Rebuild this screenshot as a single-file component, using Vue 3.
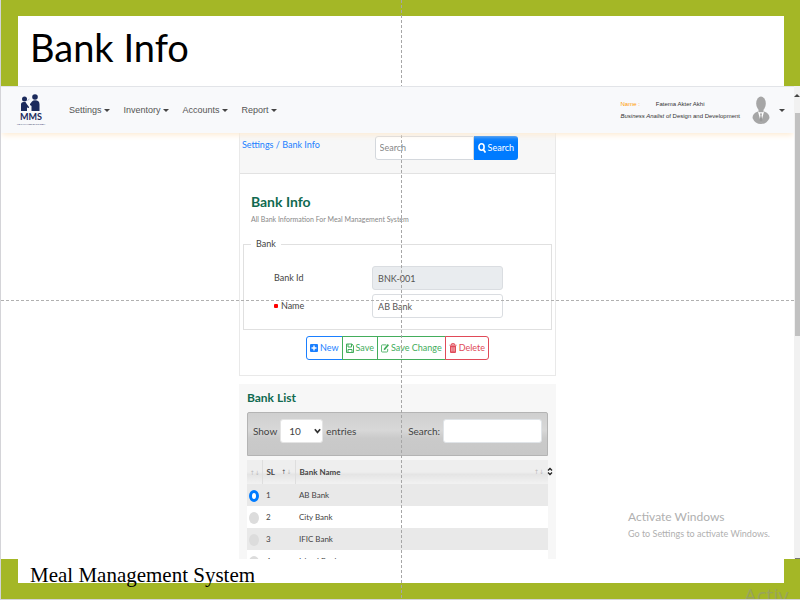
<script setup>
import { ref } from 'vue'

const menus = ['Settings', 'Inventory', 'Accounts', 'Report']
const banks = [
  { sl: 1, name: 'AB Bank' },
  { sl: 2, name: 'City Bank' },
  { sl: 3, name: 'IFIC Bank' },
  { sl: 4, name: 'Islami Bank' },
]
const selected = ref(1)
const bankId = ref('BNK-001')
const bankName = ref('AB Bank')
const query = ref('')
const filter = ref('')
const pageSize = ref('10')
</script>

<template>
  <div class="slide">
    <header class="slide-head"><h1>Bank Info</h1></header>

    <div class="window">
      <div class="page">
        <nav class="navbar">
          <a class="brand" href="#" aria-label="MMS">
            <svg class="logo" viewBox="0 0 32 18" aria-hidden="true">
              <g fill="#1b2a5c">
                <circle cx="9.5" cy="5" r="2.5" />
                <path d="M6 17V10.5Q6 8 8.5 8h2l1.6 2.4L14 13v1l-2-.5V17z" />
                <circle cx="20" cy="3" r="2.8" />
                <path d="M16.500 17v-5l-1.500-1v-1l2-2.500Q18 6.300 20 6.300q4.500 0 4.500 4.200V17z" />
              </g>
              <path d="M12.500 6.500l2-1.500" stroke="#9aa6c4" stroke-width=".7" fill="none" />
            </svg>
            <span class="brand-name">MMS</span>
            <span class="brand-sub">MEAL MANAGEMENT SYSTEM</span>
          </a>
          <ul class="menu">
            <li v-for="m in menus" :key="m"><a href="#">{{ m }}<i class="caret"></i></a></li>
          </ul>
          <div class="user">
            <div class="user-name"><span class="tag">Name :</span><span>Fatema Akter Akhi</span></div>
            <div><em>Business Analist</em> of Design and Development</div>
          </div>
          <button class="avatar" type="button" aria-label="Account">
            <svg viewBox="0 0 18 28" aria-hidden="true">
              <ellipse cx="9" cy="7.500" rx="4.800" ry="7" fill="#a6a6a6" />
              <path d="M6.500 12h5v4h-5zM0.500 22Q.5 17 6 15.500L9 17l3-1.500q5.500 1.500 5.500 6.500Q15 28 9 28T.5 22z" fill="#a6a6a6" />
              <path d="M6 15.500l3 11.500 3-11.500-3 1.500z" fill="#fff" />
              <path d="M8 17.500h2l-.5 2 .8 5L9 27l-1.300-2.500.8-5z" fill="#999" />
            </svg>
            <i class="caret"></i>
          </button>
        </nav>

        <main class="column">
          <section class="card">
            <div class="card-head">
              <div class="crumbs"><a href="#">Settings</a> / <a href="#">Bank Info</a></div>
              <form class="search" @submit.prevent>
                <input v-model="query" type="text" placeholder="Search" aria-label="Search" />
                <button type="submit">
                  <svg viewBox="0 0 8 10" aria-hidden="true"><ellipse cx="3.500" cy="4" rx="2.600" ry="3.200" fill="none" stroke="#fff" stroke-width="1.600" /><path d="M5.300 6.500l2.200 3" stroke="#fff" stroke-width="1.800" /></svg>
                  Search
                </button>
              </form>
            </div>
            <form class="card-body" @submit.prevent>
              <h2>Bank Info</h2>
              <p class="lead">All Bank Information For Meal Management System</p>
              <fieldset>
                <legend>Bank</legend>
                <div class="field">
                  <label for="bank-id">Bank Id</label>
                  <input id="bank-id" v-model="bankId" type="text" readonly />
                </div>
                <div class="field">
                  <label for="bank-name"><i class="required"></i>Name</label>
                  <input id="bank-name" v-model="bankName" type="text" />
                </div>
              </fieldset>
              <div class="actions">
                <button class="new" type="button">
                  <svg viewBox="0 0 8 10" aria-hidden="true"><rect y="1" width="8" height="8" rx="1" fill="currentColor" /><path d="M4 2.500v5M1.500 5h5" stroke="#fff" stroke-width="1.400" /></svg>New
                </button>
                <button class="save" type="button">
                  <svg viewBox="0 0 8 10" aria-hidden="true"><path d="M.5 1h5.500L7.500 3v6.500H.5zM2 1v3h3.500V1M2 9V6.500h4V9" fill="none" stroke="currentColor" /></svg>Save
                </button>
                <button class="save" type="button">
                  <svg viewBox="0 0 9 10" aria-hidden="true"><path d="M6 1.500H1.500Q.5 1.500.5 2.500v6q0 1 1 1h5q1 0 1-1V6" fill="none" stroke="currentColor" /><path d="M3 7.500l.4-2L7.500.5 9 2 4.800 7z" fill="currentColor" /></svg>Save Change
                </button>
                <button class="delete" type="button">
                  <svg viewBox="0 0 8 10" aria-hidden="true"><path d="M.5 2.200h7M2.700 2V.7h2.600V2" fill="none" stroke="currentColor" /><path d="M1 3h6v6q0 1-1 1H2q-1 0-1-1z" fill="currentColor" /><path d="M2.700 4.200v4.300M4 4.200v4.300M5.300 4.200v4.300" stroke="#fff" stroke-width=".5" /></svg>Delete
                </button>
              </div>
            </form>
          </section>

          <section class="list">
            <h3>Bank List</h3>
            <div class="toolbar">
              <label class="length">Show
                <span class="select">
                  <select v-model="pageSize"><option>10</option><option>25</option><option>50</option></select>
                  <svg viewBox="0 0 6 5" aria-hidden="true"><path d="M.7 1L3 3.700 5.300 1" fill="none" stroke="#333" stroke-width="1.400" /></svg>
                </span>
                entries
              </label>
              <label class="filter">Search: <input v-model="filter" type="text" /></label>
            </div>
            <div class="table-wrap">
              <table>
                <thead>
                  <tr>
                    <th class="pick"><span class="sort">↑↓</span></th>
                    <th class="sl"><div class="th">SL<span class="sort"><b>↑</b>↓</span></div></th>
                    <th><div class="th">Bank Name<span class="sort">↑↓</span></div></th>
                  </tr>
                </thead>
                <tbody>
                  <tr v-for="b in banks" :key="b.sl">
                    <td class="pick"><input v-model="selected" type="radio" name="bank" :value="b.sl" :aria-label="b.name" /></td>
                    <td>{{ b.sl }}</td>
                    <td>{{ b.name }}</td>
                  </tr>
                </tbody>
              </table>
              <svg class="updown" viewBox="0 0 6 8" aria-hidden="true"><path d="M1 3l2-2 2 2M1 5l2 2 2-2" fill="none" stroke="#222" stroke-width="1.300" /></svg>
            </div>
          </section>
        </main>

        <div class="watermark">
          <div class="wm-title">Activate Windows</div>
          <div>Go to Settings to activate Windows.</div>
        </div>
      </div>

      <div class="scrollbar" aria-hidden="true">
        <i class="up"></i>
        <i class="thumb"></i>
        <i class="down"></i>
      </div>
    </div>

    <footer class="slide-foot"><p>Meal Management System</p></footer>

    <div class="guide-v"></div>
    <div class="guide-h"></div>
    <div class="corner-mark">Activ</div>
  </div>
</template>

<style>
body {
  margin: 0;
}
</style>

<style scoped>
* {
  box-sizing: border-box;
}
.slide {
  position: relative;
  display: flex;
  flex-direction: column;
  height: 100vh;
  overflow: hidden;
  border-left: 1px solid #d4d4d8;
  border-bottom: 1px solid #d4d4d8;
  background: #fff;
  color: #444;
  font-family: Lato, "Open Sans", sans-serif;
  font-size: 9px;
  line-height: 14px;
}
h1, h2, h3, p, ul {
  margin: 0;
  padding: 0;
}
a {
  text-decoration: none;
}
input, button, select {
  font: inherit;
  color: inherit;
}
.slide-head {
  border: 16px solid #a4b726;
  border-left-width: 17px;
  border-bottom: 0;
  padding: 7px 12px 15px;
}
h1 {
  font: 400 38px/48px Lato, sans-serif;
  color: #000;
}
.slide-foot {
  border: 16px solid #a4b726;
  border-left-width: 17px;
  border-top: 0;
  height: 40px;
  padding: 3px 12px 0;
}
.slide-foot p {
  font: 400 21px/26px "Liberation Serif", serif;
  color: #000;
}
.window {
  flex: 1;
  min-height: 0;
  display: flex;
}
.page {
  position: relative;
  flex: 1;
  min-width: 0;
  overflow: hidden;
}
.navbar {
  position: relative;
  z-index: 1;
  display: flex;
  align-items: center;
  height: 47px;
  padding: 0 9px 0 14px;
  background: #f8f9fb;
  border-top: 1px solid #e2e4e8;
  box-shadow: 0 3px 6px -1px #fdebd3;
}
.brand {
  display: flex;
  flex-direction: column;
  align-items: center;
  width: 32px;
  color: #1b2a5c;
}
.logo {
  width: 32px;
  height: 18px;
}
.brand-name {
  font: 700 9px/10px Lato, sans-serif;
}
.brand-sub {
  font-size: 2px;
  line-height: 4px;
  white-space: nowrap;
}
.menu {
  display: flex;
  gap: 14px;
  margin-left: 22px;
  list-style: none;
  font-family: "Liberation Sans", sans-serif;
}
.menu a {
  display: flex;
  align-items: center;
  gap: 2px;
  color: #555;
}
.caret {
  border: 3px solid transparent;
  border-top-color: #444;
  border-bottom: 0;
}
.user {
  margin-left: auto;
  font: 400 6px/12px "Liberation Sans", sans-serif;
  white-space: nowrap;
  color: #333;
}
.user-name {
  display: flex;
  gap: 16px;
}
.tag {
  color: #f90;
}
.avatar {
  display: flex;
  align-items: center;
  gap: 9px;
  margin-left: 12px;
  padding: 0;
  border: 0;
  background: none;
}
.avatar svg {
  width: 18px;
  height: 28px;
}
.column {
  width: 40%;
  margin: 0 auto;
}
.card {
  border: 1px solid #e9e9e9;
  border-top: 0;
}
.card-head {
  display: flex;
  justify-content: space-between;
  height: 41px;
  padding: 3px 37px 0 2px;
  background: #f7f7f7;
  border-bottom: 1px solid #e2e2e2;
}
.crumbs {
  padding-top: 2px;
  color: #2080ff;
}
.crumbs a {
  color: #2080ff;
}
.search {
  display: flex;
  height: 24px;
}
.search input {
  width: 99px;
  padding: 0 4px;
  border: 1px solid #d4d8dd;
  border-radius: 3px 0 0 3px;
}
.search input::placeholder {
  color: #888;
}
.search button {
  display: flex;
  align-items: center;
  gap: 2px;
  padding: 0 4px;
  border: 0;
  border-radius: 0 3px 3px 0;
  background: #007bff;
  color: #fff;
}
.search svg {
  width: 8px;
  height: 10px;
}
.card-body {
  padding: 17px 3px 15px;
}
h2 {
  padding-left: 8px;
  font-size: 14px;
  line-height: 22px;
  color: #106a50;
}
.lead {
  padding-left: 8px;
  font-size: 7px;
  line-height: 12px;
  color: #888;
}
fieldset {
  min-width: 0;
  margin: 12px 0 6px;
  padding: 15px 48px 11px 30px;
  border: 1px solid #e0e0e0;
}
legend {
  margin-left: -23px;
  padding: 0 5px;
}
.field {
  display: flex;
  justify-content: space-between;
  align-items: center;
}
.field + .field {
  margin-top: 4px;
}
.field label {
  display: flex;
  align-items: center;
  gap: 3px;
}
.required {
  width: 4px;
  height: 4px;
  border-radius: 1px;
  background: red;
}
.field input {
  width: 131px;
  height: 24px;
  padding: 0 5px;
  border: 1px solid #dadde1;
  border-radius: 3px;
  background: #fff;
  color: #555;
}
.field input[readonly] {
  background: #e9ecef;
}
.actions {
  display: flex;
  justify-content: center;
}
.actions button {
  display: flex;
  align-items: center;
  gap: 2px;
  height: 24px;
  padding: 0 3px;
  border: 1px solid currentColor;
  background: #fff;
}
.actions button + button {
  margin-left: -1px;
}
.actions button:first-child {
  border-radius: 3px 0 0 3px;
}
.actions button:last-child {
  border-radius: 0 3px 3px 0;
}
.actions svg {
  width: 8px;
  height: 10px;
}
.actions .new {
  color: #1a7fff;
}
.actions .save {
  color: #43ad5c;
}
.actions .delete {
  color: #e04a58;
}
.list {
  margin-top: 8px;
  padding: 5px 8px 0;
  background: #f7f7f7;
}
h3 {
  font-size: 12px;
  line-height: 18px;
  color: #106a50;
}
.toolbar {
  display: flex;
  justify-content: space-between;
  margin-top: 5px;
  height: 44px;
  padding: 6px 5px 0;
  border: 1px solid #b4b4b4;
  border-radius: 2px 2px 0 0;
  background: linear-gradient(#cfcfcf, #d8d8d8 40%, #cacaca 60%, #c8c8c8);
  font-size: 10px;
}
.toolbar label {
  display: flex;
  align-items: center;
  height: 24px;
  gap: 3px;
}
.select {
  position: relative;
  display: flex;
}
.select select {
  width: 43px;
  height: 24px;
  padding: 0 8px;
  border: 1px solid #e4e4e4;
  border-radius: 3px;
  background: #fff;
  appearance: none;
}
.select svg {
  position: absolute;
  right: 2px;
  top: 9px;
  width: 7px;
  height: 6px;
}
.filter input {
  width: 99px;
  height: 24px;
  border: 1px solid #e0e4e8;
  border-radius: 3px;
  background: #fff;
}
.table-wrap {
  position: relative;
  margin-top: 4px;
}
table {
  width: 100%;
  table-layout: fixed;
  border-collapse: collapse;
  font-size: 8px;
}
th {
  height: 24px;
  padding: 0 4px 0 3px;
  text-align: left;
  background: linear-gradient(#eee 50%, #e4e4e4 60%, #f2f2f2);
}
th + th {
  border-left: 1px solid #dedede;
}
.th {
  display: flex;
  justify-content: space-between;
}
.pick {
  width: 16px;
}
.sl {
  width: 33px;
}
.sort {
  font: 400 6px/14px "DejaVu Sans", sans-serif;
  color: #bbb;
}
.sort b {
  font-weight: 400;
  color: #555;
}
th.pick {
  padding: 0 2px;
  text-align: center;
}
td {
  height: 22px;
  padding: 0 3px;
  background: #fff;
}
tbody tr:nth-child(odd) td {
  background: #e9e9e9;
}
td.pick {
  padding: 2px 2px 0;
}
td input {
  display: block;
  width: 10px;
  height: 12px;
  margin: 0;
  border-radius: 50%;
  background: #dcdcdc;
  appearance: none;
}
td input:checked {
  border: 3px solid #007bff;
  background: #fff;
}
.updown {
  position: absolute;
  top: 7px;
  right: -5px;
  width: 6px;
  height: 9px;
}
.watermark {
  position: absolute;
  right: 24px;
  bottom: 17px;
  font-size: 9px;
  line-height: 16px;
  color: #b0b0b0;
}
.wm-title {
  font-size: 12px;
  line-height: 19px;
}
.scrollbar {
  display: flex;
  flex-direction: column;
  align-items: center;
  width: 6px;
  padding-top: 8px;
  background: #f1f1f1;
}
.up, .down {
  border: 3px solid transparent;
  border-top: 0;
  border-bottom-color: #444;
}
.thumb {
  width: 5px;
  height: 48%;
  margin-top: 16px;
  background: #c1c1c1;
}
.down {
  margin-top: auto;
  border: 0;
  width: 5px;
  height: 1px;
  background: #777;
}
.guide-v, .guide-h {
  position: absolute;
  pointer-events: none;
}
.guide-v {
  top: 0;
  bottom: 0;
  left: 50%;
  width: 1px;
  background: repeating-linear-gradient(#a6a6a6 0 3px, transparent 3px 5px);
}
.guide-h {
  left: 0;
  right: 4px;
  top: 50%;
  height: 1px;
  background: repeating-linear-gradient(90deg, #b0b0b0 0 3px, transparent 3px 5px);
}
.corner-mark {
  position: absolute;
  left: 93%;
  bottom: -9px;
  font: 400 20px/24px "Open Sans", sans-serif;
  color: #98a35c;
}
</style>
